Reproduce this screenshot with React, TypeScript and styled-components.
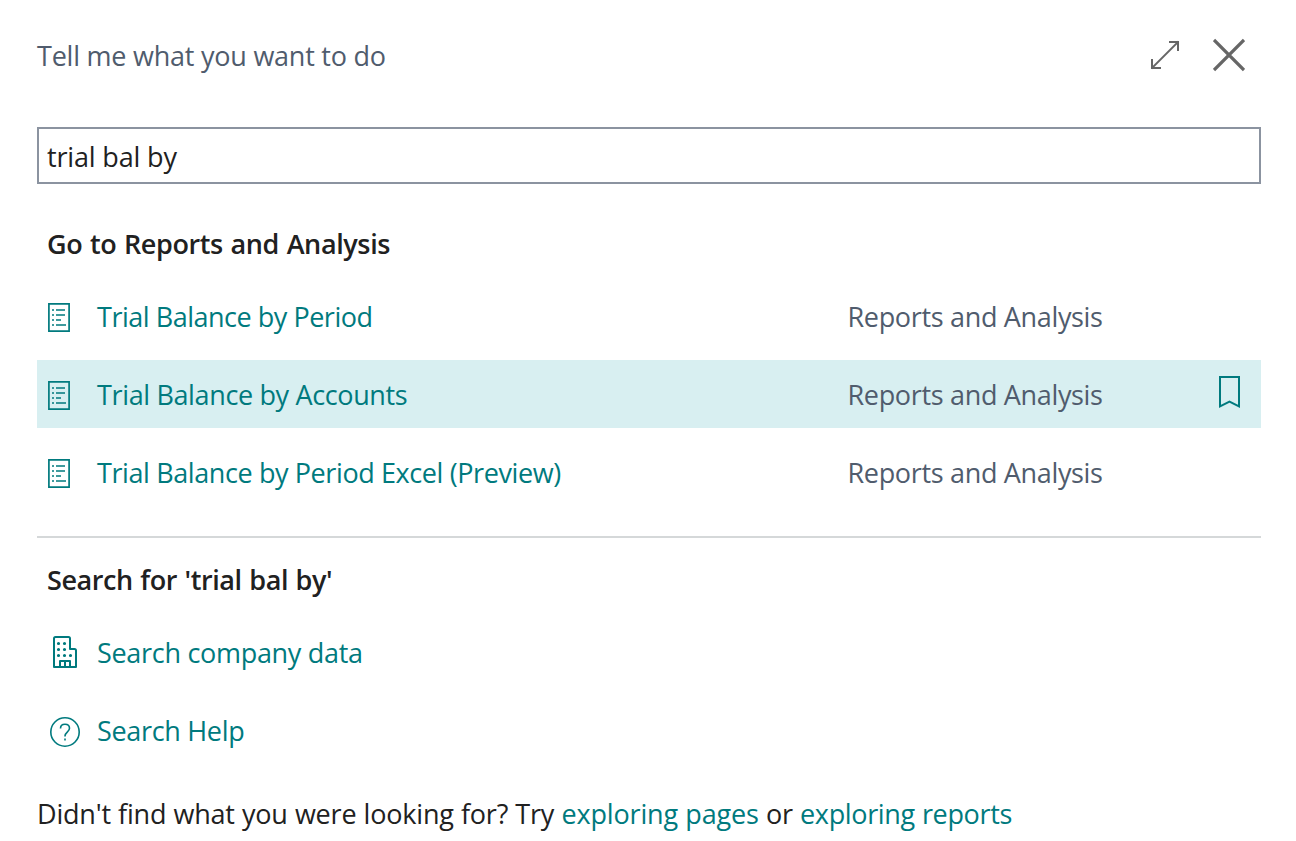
import React from 'react';
import styled, { createGlobalStyle } from 'styled-components';

const teal = '#007a7e';
const slate = '#505c6d';
const ink = '#212121';

const Global = createGlobalStyle`
  * { box-sizing: border-box; }
  body {
    margin: 0;
    background: #fff;
    color: ${ink};
    font: 400 27px/36px "Open Sans", "Noto Sans", sans-serif;
  }
`;

const Dialog = styled.main`
  width: 1296px;
  height: 841px;
  padding: 38px 35px 0 37px;
  overflow: hidden;
`;

const Header = styled.header`
  display: flex;
  justify-content: space-between;
  height: 89px;
  color: ${slate};
`;

const Title = styled.h1`
  margin: 0;
  font: inherit;
  letter-spacing: -0.23px;
`;

const Actions = styled.div`
  display: flex;
  gap: 32px;
  padding-right: 16px;
`;

const IconButton = styled.button`
  display: block;
  width: 32px;
  height: 34px;
  padding: 0;
  border: 0;
  background: none;
  color: #666;
`;

const SearchInput = styled.input`
  display: block;
  width: 100%;
  height: 57px;
  padding: 2px 8px 0;
  border: 2px solid #8b93a0;
  border-radius: 0;
  outline: 0;
  background: #fff;
  color: ${ink};
  font: inherit;
  letter-spacing: -0.16px;
`;

const Section = styled.section<{ $top: number }>`
  padding-top: ${p => p.$top}px;
`;

const Heading = styled.h2<{ $tracking: number }>`
  margin: 0 0 20px;
  padding-left: 10px;
  font: inherit;
  font-weight: 600;
  letter-spacing: ${p => p.$tracking}px;
  word-spacing: 1px;
`;

const List = styled.ul`
  display: grid;
  gap: 10px;
  margin: 0;
  padding: 0;
  list-style: none;
`;

const Row = styled.li<{ $selected?: boolean }>`
  display: grid;
  grid-template-columns: 60px 750.5px 1fr 42px;
  align-items: center;
  height: 68px;
  padding-top: 2px;
  background: ${p => (p.$selected ? '#d8eff1' : 'transparent')};
  color: ${teal};
`;

const IconCell = styled.span<{ $inset: number; $lift?: number; $drop?: number }>`
  display: flex;
  padding: ${p => p.$drop ?? 0}px 0 ${p => p.$lift ?? 0}px ${p => p.$inset}px;
`;

const Label = styled.span<{ $tracking: number }>`
  color: ${teal};
  letter-spacing: ${p => p.$tracking}px;
  white-space: pre;
`;

const Category = styled.span`
  color: ${slate};
  letter-spacing: -0.33px;
`;

const Divider = styled.hr`
  height: 2px;
  margin: 30px 0 0;
  border: 0;
  background: #d5d8d9;
`;

const Footer = styled.p`
  margin: 32px 0 0;
  letter-spacing: -0.2px;
  word-spacing: 0.4px;
  white-space: nowrap;
`;

const Svg = styled.svg`
  display: block;
  fill: none;
  stroke: currentColor;
`;

const ExpandIcon = () => (
  <Svg width="32" height="34" viewBox="0 0 32 34" strokeWidth="2">
    <path d="M2.5 30.5 29.5 3.5" strokeWidth="1.8" />
    <path d="M20 4h9v9M3 21v9h9" />
  </Svg>
);

const CloseIcon = () => (
  <Svg width="32" height="34" viewBox="0 0 32 34" strokeWidth="3.2">
    <path d="M1 2 31 32M31 2 1 32" />
  </Svg>
);

const ReportIcon = () => (
  <Svg width="22" height="29" viewBox="0 0 22 29" strokeWidth="1.7">
    <path d="M.9.9h20.2v27.2H.9z" />
    <path d="M4 7h2M8 7h9M4 12h2M8 12h9M4 17h2M8 17h5M4 22h2M8 22h10" strokeWidth="1.5" />
  </Svg>
);

const CompanyIcon = () => (
  <Svg width="24" height="32" viewBox="0 0 24 32" strokeWidth="2" strokeLinejoin="round">
    <path d="M1 31V2.5Q1 1 2.5 1h13Q17 1 17 2.5V13h4.5Q23 13 23 14.5V31zM7 31v-6h10v6M12 25v6" />
    <path
      d="M5.5 7.5h.01M11.5 7.5h.01M5.5 13.5h.01M11.5 13.5h.01M5.5 19.5h.01M11.5 19.5h.01M17.500 19.5h.01"
      strokeWidth="3.2"
      strokeLinecap="round"
    />
  </Svg>
);

const HelpIcon = () => (
  <Svg width="30" height="30" viewBox="0 0 30 30" strokeWidth="1.6">
    <circle cx="15" cy="15" r="14.2" />
    <path d="M10.5 11.5C10.5 9 12.3 7.300 15 7.300s4.5 1.5 4.5 4c0 3.700-4.5 4-4.5 7.700v.5M15 21.500v2" />
  </Svg>
);

const BookmarkIcon = () => (
  <Svg width="21" height="32" viewBox="0 0 21 32" strokeWidth="2">
    <path d="M1 1h19v29.3l-9.5-4.700L1 30.300z" />
  </Svg>
);

const Bookmark = styled.span`
  padding-bottom: 6px;
`;

const reports = [
  { name: 'Trial Balance by Period', tracking: -0.48 },
  { name: 'Trial Balance by Accounts', tracking: -0.36, selected: true },
  { name: 'Trial Balance by Period Excel (Preview)', tracking: -0.4 },
];

export default function App() {
  return (
    <Dialog>
      <Global />
      <Header>
        <Title>Tell me what you want to do</Title>
        <Actions>
          <IconButton aria-label="Expand"><ExpandIcon /></IconButton>
          <IconButton aria-label="Close"><CloseIcon /></IconButton>
        </Actions>
      </Header>
      <SearchInput defaultValue="trial bal by" aria-label="Search" spellCheck={false} />
      <Section $top={42}>
        <Heading $tracking={-0.38}>Go to Reports and Analysis</Heading>
        <List>
          {reports.map(r => (
            <Row key={r.name} $selected={r.selected}>
              <IconCell $inset={11}><ReportIcon /></IconCell>
              <Label $tracking={r.tracking}>{r.name}</Label>
              <Category>Reports and Analysis</Category>
              {r.selected && <Bookmark><BookmarkIcon /></Bookmark>}
            </Row>
          ))}
        </List>
      </Section>
      <Divider />
      <Section $top={24}>
        <Heading $tracking={-0.42}>Search for 'trial bal by'</Heading>
        <List>
          <Row>
            <IconCell $inset={16} $lift={2}><CompanyIcon /></IconCell>
            <Label $tracking={-0.3}>Search company data</Label>
          </Row>
          <Row>
            <IconCell $inset={13} $drop={2}><HelpIcon /></IconCell>
            <Label $tracking={-0.32}>Search Help</Label>
          </Row>
        </List>
      </Section>
      <Footer>
        Didn't find what you were looking for? Try <Label $tracking={-0.15}>exploring pages</Label> or{' '}
        <Label $tracking={-0.35}>exploring reports</Label>
      </Footer>
    </Dialog>
  );
}
